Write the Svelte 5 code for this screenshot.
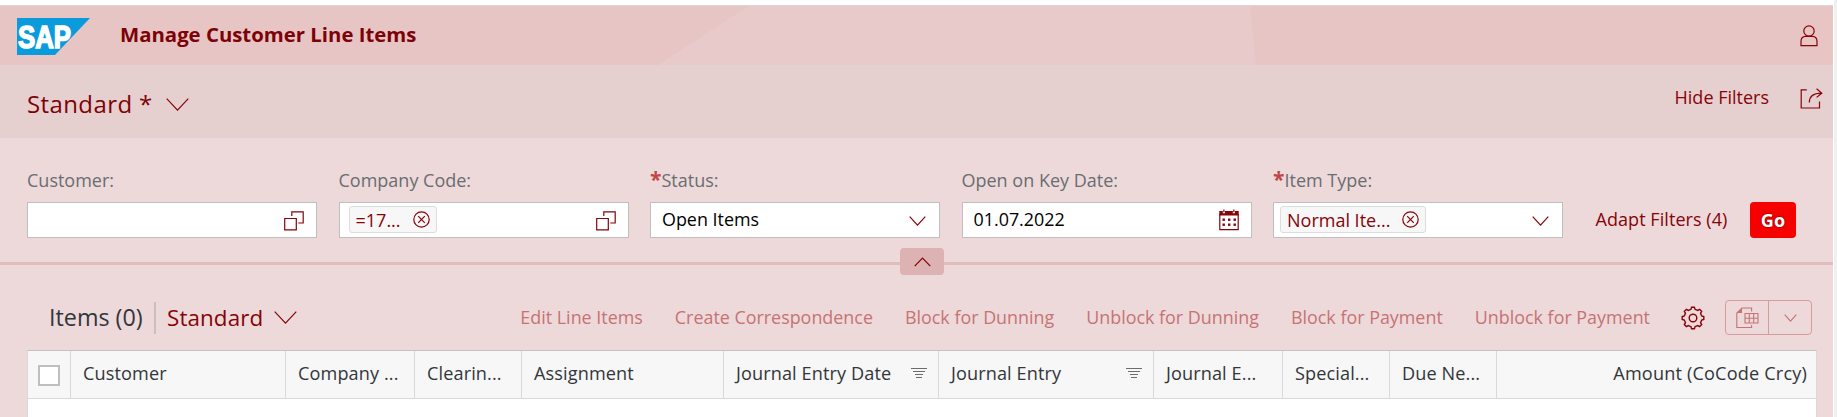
<!--
  App.svelte - Manage Customer Line Items

  Shell bar, variant title, filter bar and the (empty) line item table.
-->
<script lang="ts">
  interface Filter {
    label: string;
    kind: 'help' | 'select' | 'date';
    required?: boolean;
    value?: string;
    token?: string;
  }

  interface Column {
    label: string;
    width: number;
    filtered?: boolean;
    alignEnd?: boolean;
  }

  const filters: Filter[] = [
    { label: 'Customer:', kind: 'help' },
    { label: 'Company Code:', kind: 'help', token: '=17...' },
    { label: 'Status:', kind: 'select', required: true, value: 'Open Items' },
    { label: 'Open on Key Date:', kind: 'date', value: '01.07.2022' },
    { label: 'Item Type:', kind: 'select', required: true, token: 'Normal Ite...' },
  ];

  const actions = [
    'Edit Line Items',
    'Create Correspondence',
    'Block for Dunning',
    'Unblock for Dunning',
    'Block for Payment',
    'Unblock for Payment',
  ];

  const columns: Column[] = [
    { label: 'Customer', width: 215 },
    { label: 'Company ...', width: 129 },
    { label: 'Clearin...', width: 107 },
    { label: 'Assignment', width: 202 },
    { label: 'Journal Entry Date', width: 215, filtered: true },
    { label: 'Journal Entry', width: 215, filtered: true },
    { label: 'Journal E...', width: 129 },
    { label: 'Special...', width: 107 },
    { label: 'Due Ne...', width: 107 },
    { label: 'Amount (CoCode Crcy)', width: 319, alignEnd: true },
  ];

  const calendarDots = [9.5, 14.5].flatMap((y) => [3.5, 9, 14.5].map((x) => ({ x, y })));

  // Outline of the settings gear: eight teeth around (12, 12)
  function gearPath(teeth: number, inner: number, outer: number) {
    const step = (Math.PI * 2) / teeth;
    const points: string[] = [];
    for (let i = 0; i < teeth; i++) {
      const a = i * step - Math.PI / 2;
      for (const [offset, r] of [[-0.29, inner], [-0.17, outer], [0.17, outer], [0.29, inner]]) {
        const t = a + offset * step;
        points.push(`${(12 + r * Math.cos(t)).toFixed(2)} ${(12 + r * Math.sin(t)).toFixed(2)}`);
      }
    }
    return `M${points.join('L')}Z`;
  }
</script>

{#snippet chevron(w: number, h: number)}
  <svg class="icon" width={w} height={h} viewBox="0 0 {w} {h}">
    <path d="M.7 .7L{w / 2} {h - 0.9}L{w - 0.7} .7" />
  </svg>
{/snippet}

{#snippet token(text: string)}
  <span class="token">
    {text}
    <svg class="icon" width="17" height="17" viewBox="0 0 17 17">
      <circle cx="8.5" cy="8.5" r="7.7" />
      <path d="M5.2 5.2l6.6 6.6M11.8 5.2l-6.6 6.6" />
    </svg>
  </span>
{/snippet}

<div class="page">
  <header class="shell">
    <svg class="backdrop" width="1833" height="59" viewBox="0 0 1833 59">
      <path d="M749 0H1250L1256 59H658Z" />
    </svg>
    <svg class="logo" width="73" height="37" viewBox="0 0 73 37">
      <path d="M0 0H73L38 37H0Z" />
      <text x="1" y="29.5" textLength="53" lengthAdjust="spacingAndGlyphs">SAP</text>
    </svg>
    <h1>Manage Customer Line Items</h1>
    <svg class="icon user" width="18" height="22" viewBox="0 0 18 22">
      <circle cx="9" cy="6" r="5.2" />
      <path d="M1 20.6V16.4Q1 11.6 5.6 11.4H12.4Q17 11.6 17 16.4V20.6Z" />
    </svg>
  </header>

  <div class="title-bar">
    <button class="variant">Standard * {@render chevron(23, 13)}</button>
    <div class="title-actions">
      <button class="link">Hide Filters</button>
      <svg class="icon share" width="23" height="21" viewBox="0 0 23 21">
        <path d="M6.8 1.8H1.2V20H19.5V13.4M9.3 14.5Q9.3 5.4 21.3 5.2M16.6 .8L21.8 5.2L16.6 9.4" />
      </svg>
    </div>
  </div>

  <section class="filter-bar">
    {#each filters as filter}
      <div class="field">
        <div class="label">{#if filter.required}<b>*</b>{/if}{filter.label}</div>
        <div class="input" class:tokenized={filter.token}>
          {#if filter.token}{@render token(filter.token)}{/if}
          {#if filter.value}<span class="value">{filter.value}</span>{/if}
          <span class="addon {filter.kind}">
            {#if filter.kind === 'help'}
              <svg class="icon" width="20" height="20" viewBox="0 0 20 20">
                <path d="M.7 7.5H12.3V18.9H.7ZM7.8 5V.8H19.2V12H14.3" />
              </svg>
            {:else if filter.kind === 'select'}
              {@render chevron(17, 10)}
            {:else}
              <svg class="icon" width="20" height="22" viewBox="0 0 20 22">
                <path class="solid" d="M.3 2H3.8V4.2H6V2H13.8V4.2H16V2H19.7V6.4H.3Z" />
                <path d="M.8 5V20.6H19.2V5M4.9 .4V3.2M14.9 .4V3.2" />
                {#each calendarDots as dot}
                  <rect class="solid" x={dot.x} y={dot.y} width="2.4" height="2.4" />
                {/each}
              </svg>
            {/if}
          </span>
        </div>
      </div>
    {/each}
    <button class="link adapt">Adapt Filters (4)</button>
    <button class="go">Go</button>
  </section>

  <div class="splitter">
    <button class="collapse" aria-label="Collapse header">
      <svg class="icon" width="17" height="10" viewBox="0 0 17 10"><path d="M.7 9.2L8.5 1L16.3 9.2" /></svg>
    </button>
  </div>

  <div class="toolbar">
    <h2>Items (0)</h2>
    <button class="variant small">Standard {@render chevron(23, 13)}</button>
    <div class="actions">
      {#each actions as action}
        <button class="link" disabled>{action}</button>
      {/each}
    </div>
    <svg class="icon gear" width="24" height="24" viewBox="0 0 24 24">
      <path d={gearPath(8, 8.9, 10.9)} />
      <circle cx="12" cy="12" r="3.8" />
    </svg>
    <div class="export">
      <span class="export-main">
        <svg class="icon" width="23" height="22" viewBox="0 0 23 22">
          <path d="M15.6 4.5V1H6L.8 6V20.5H15.6V18" />
          <path class="solid" d="M.8 6L6 .8V6Z" />
          <path d="M9 6.5H22V16H9ZM9 11.2H22M13.3 6.5V16M17.7 6.5V16" />
        </svg>
      </span>
      <span class="export-menu">{@render chevron(13, 8)}</span>
    </div>
  </div>

  <div class="table">
    <div class="row">
      <div class="select-all"><span class="checkbox"></span></div>
      {#each columns as column}
        <div class="cell" class:end={column.alignEnd} style="width: {column.width}px">
          {column.label}
          {#if column.filtered}
            <svg class="filter-icon" width="16" height="12" viewBox="0 0 16 12">
              <path d="M0 1.5H16M2 4.5H14M4 7.5H12M5 10.5H11" />
            </svg>
          {/if}
        </div>
      {/each}
    </div>
  </div>
</div>

<style>
  :global(body) {
    background: #f0f0f0;
  }

  .page {
    box-sizing: border-box;
    width: 1834px;
    height: 417px;
    overflow: hidden;
    border-top: 5px solid #fff;
    border-right: 1px solid #fff;
    background: #edd9da;
    color: #32363a;
    font: 18px/24px 'Open Sans', sans-serif;
  }

  h1,
  h2 {
    margin: 0;
    font-weight: 400;
  }

  button {
    padding: 0;
    border: 0;
    background: none;
    color: #860308;
    font: inherit;
    white-space: nowrap;
  }

  .icon {
    display: block;
    flex-shrink: 0;
    fill: none;
    stroke: #860308;
    stroke-width: 1.2;
  }

  .icon .solid {
    fill: #860308;
    stroke: none;
  }

  .shell {
    position: relative;
    box-sizing: border-box;
    display: flex;
    align-items: flex-start;
    height: 60px;
    padding: 12px 15px 0 17px;
    border-top: 1px solid #dcd6d6;
    background: #e7c5c5;
  }

  .backdrop {
    position: absolute;
    top: 0;
    left: 0;
    fill: #e9cacb;
  }

  .logo {
    position: relative;
  }

  .logo path {
    fill: #0a9bdc;
  }

  .logo text {
    fill: #fff;
    stroke: #fff;
    stroke-width: 1.6;
    font: 700 31px 'Liberation Sans', sans-serif;
  }

  h1 {
    position: relative;
    margin: 3px 0 0 30px;
    color: #7d0207;
    font-size: 20.35px;
    font-weight: 700;
    line-height: 26px;
  }

  .user {
    position: relative;
    margin: 7px 0 0 auto;
  }

  .title-bar {
    box-sizing: border-box;
    display: flex;
    justify-content: space-between;
    height: 73px;
    padding: 22px 10px 0 27px;
    background: #e6cfcf;
  }

  .variant {
    display: flex;
    align-items: center;
    gap: 13px;
    height: 34px;
    color: #7d0207;
    font-size: 24px;
    letter-spacing: 0.4px;
  }

  .title-actions {
    display: flex;
    align-items: flex-start;
    gap: 31px;
  }

  .title-actions .link {
    margin-top: -2px;
  }

  .share {
    margin-top: 1px;
  }

  .filter-bar {
    box-sizing: border-box;
    display: flex;
    align-items: flex-end;
    gap: 21.5px;
    height: 100px;
    padding-left: 27px;
  }

  .field {
    width: 290px;
  }

  .label {
    margin-bottom: 10px;
    color: #6a6d70;
    white-space: nowrap;
  }

  .label b {
    color: #c14646;
    font-size: 21px;
    line-height: 18px;
  }

  .input {
    box-sizing: border-box;
    display: flex;
    align-items: center;
    height: 36px;
    padding: 0 12px 0 11px;
    border: 1px solid #bfbfbf;
    background: #fff;
  }

  .input.tokenized {
    padding-left: 9px;
  }

  .addon {
    margin-left: auto;
  }

  .select.addon {
    margin-top: 2px;
    margin-right: 1px;
  }

  .help.addon {
    margin-top: 1px;
  }

  .value {
    margin-bottom: 2px;
    color: #000;
    font-size: 17.9px;
  }

  .token {
    box-sizing: border-box;
    display: flex;
    align-items: center;
    gap: 12px;
    height: 27px;
    margin-bottom: 1px;
    padding: 0 6px;
    border: 1px solid #dcdcdc;
    border-radius: 3px;
    background: #f7f7f7;
    color: #860308;
  }

  .field:nth-child(5) .input {
    padding-left: 6px;
  }

  .adapt {
    margin: 0 0 7px 11px;
    letter-spacing: 0.06px;
  }

  .go {
    width: 46px;
    height: 36px;
    margin-left: 1px;
    border-radius: 4px;
    background: #f60000;
    color: #fff;
    font-weight: 700;
    line-height: 34px;
    text-shadow: 0 0 2px #500;
  }

  .splitter {
    display: flex;
    justify-content: center;
    height: 3px;
    margin-top: 24px;
    padding-left: 11px;
    background: #e0bdbd;
  }

  .collapse {
    display: flex;
    align-items: center;
    justify-content: center;
    width: 44px;
    height: 27px;
    margin-top: -14px;
    border-radius: 4px;
    background: #dcb2b2;
  }

  .toolbar {
    box-sizing: border-box;
    display: flex;
    align-items: center;
    height: 85px;
    padding: 20px 21px 0 49px;
  }

  h2 {
    width: 105px;
    height: 32px;
    margin-right: 11px;
    border-right: 2px solid #c9bfc0;
    font-size: 23.3px;
    line-height: 31px;
    white-space: nowrap;
  }

  .variant.small {
    gap: 11px;
    color: #860308;
    font-size: 22.4px;
    letter-spacing: 0.1px;
  }

  .actions {
    display: flex;
    gap: 32px;
    margin: -1px 0 0 auto;
    font-size: 17.9px;
  }

  .link:disabled {
    color: #c67374;
  }

  .gear {
    margin: 0 20px 0 31px;
    stroke-width: 1.4;
  }

  .export {
    box-sizing: border-box;
    display: flex;
    width: 87px;
    height: 35px;
    border: 1px solid #d69c9d;
    border-radius: 4px;
  }

  .export .icon {
    stroke: #c67374;
    stroke-width: 1.1;
  }

  .export .solid {
    fill: #c67374;
  }

  .export-main,
  .export-menu {
    display: flex;
    flex: 1;
    align-items: center;
    justify-content: center;
  }

  .export-main {
    border-right: 1px solid #d69c9d;
  }

  .table {
    box-sizing: border-box;
    width: 1790px;
    height: 67px;
    margin-left: 27px;
    border: solid #d9d9d9;
    border-width: 1px 1px 0;
    border-top-color: #c6c2c2;
    background: #fff;
  }

  .row {
    display: flex;
    height: 47px;
    border-bottom: 1px solid #d9d9d9;
    background: #f7f7f7;
  }

  .select-all {
    box-sizing: border-box;
    width: 43px;
    padding: 14px 10px;
    border-right: 1px solid #d9d9d9;
  }

  .checkbox {
    box-sizing: border-box;
    display: block;
    width: 22px;
    height: 21px;
    border: 2px solid #bfbfbf;
    background: #fff;
  }

  .cell {
    box-sizing: border-box;
    display: flex;
    flex-shrink: 0;
    align-items: center;
    justify-content: space-between;
    padding: 0 11px 3px 12px;
    border-right: 1px solid #d9d9d9;
    font-size: 18.1px;
    letter-spacing: 0.12px;
    white-space: nowrap;
  }

  .cell.end {
    justify-content: flex-end;
    padding-right: 9px;
    border-right: 0;
    letter-spacing: 0.18px;
  }

  .filter-icon {
    fill: none;
    stroke: #6a6d70;
  }
</style>
